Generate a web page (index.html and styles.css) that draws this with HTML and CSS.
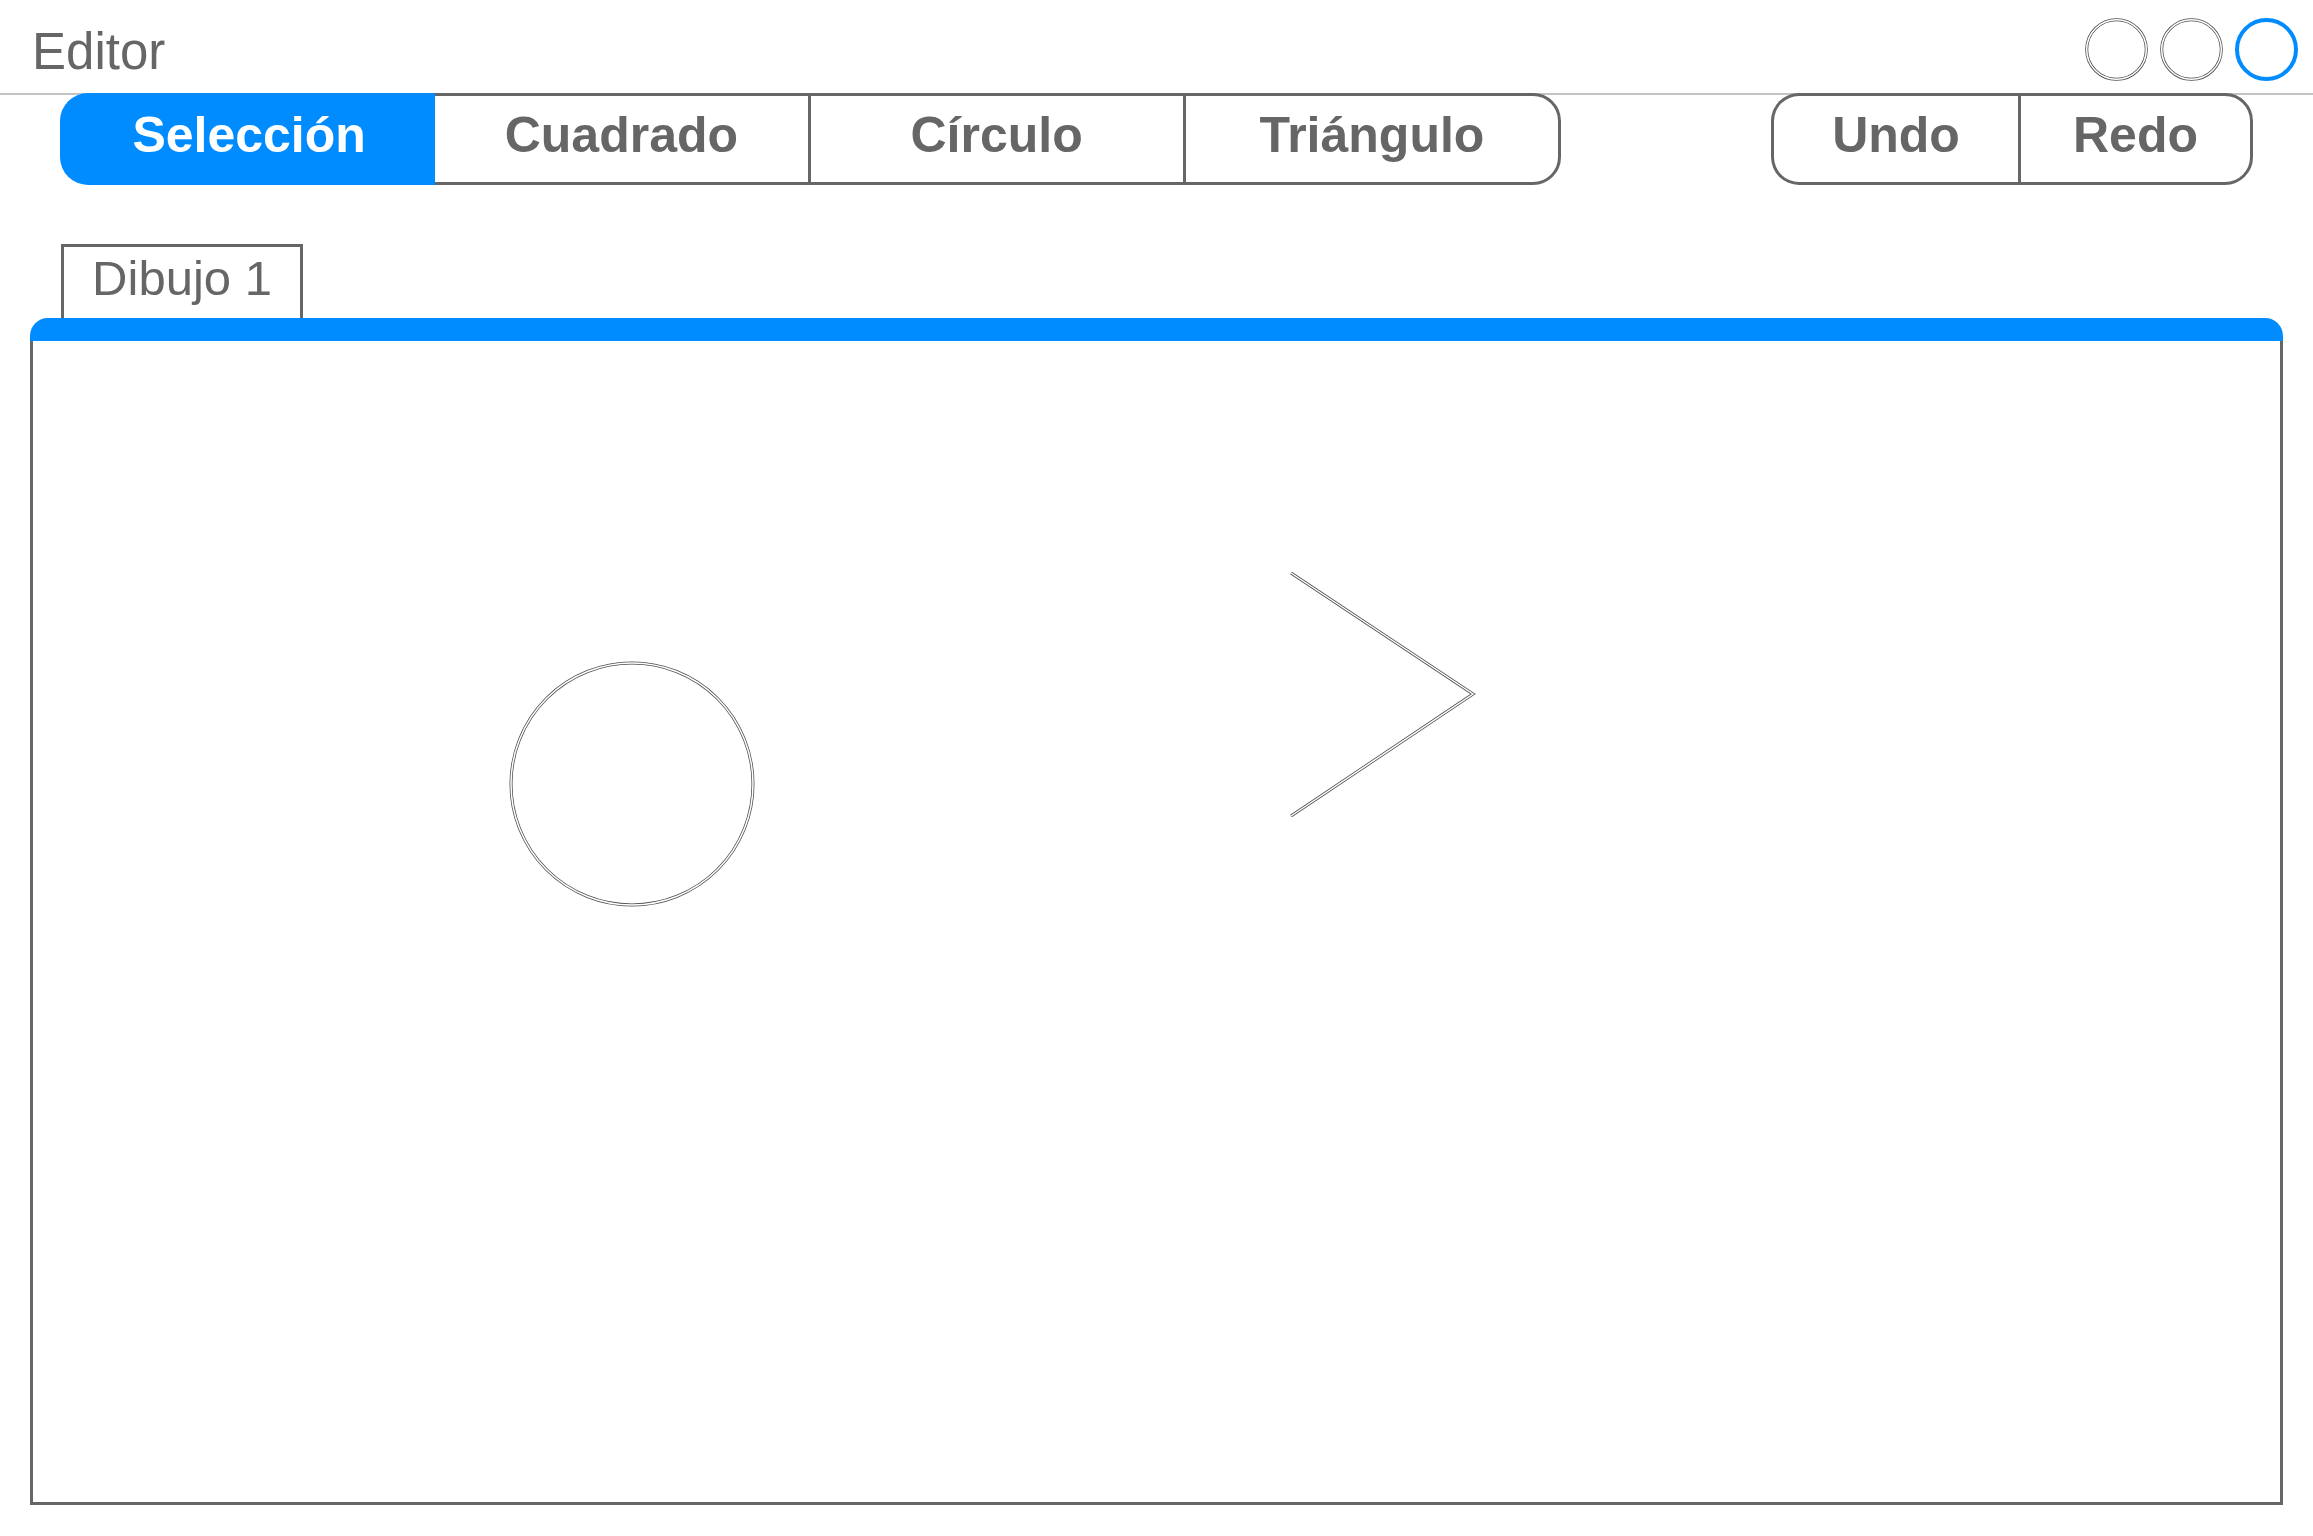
FILE: index.html
```html
<!DOCTYPE html>
<html lang="es">
<head>
<meta charset="utf-8">
<title>Editor</title>
<link rel="stylesheet" href="styles.css">
</head>
<body>
<div class="window">
  <header class="titlebar">
    <div class="title">Editor</div>
    <div class="controls">
      <svg class="ctl" viewBox="0 0 63 63"><circle cx="31.5" cy="31.5" r="29.8" class="ln-dark"/><circle cx="31.5" cy="31.5" r="29.8" class="ln-white"/></svg>
      <svg class="ctl" viewBox="0 0 63 63"><circle cx="31.5" cy="31.5" r="29.8" class="ln-dark"/><circle cx="31.5" cy="31.5" r="29.8" class="ln-white"/></svg>
      <svg class="ctl" viewBox="0 0 63 63"><circle cx="31.5" cy="31.5" r="29.5" class="ln-blue"/></svg>
    </div>
  </header>

  <div class="toolbar">
    <div class="btnbar tools">
      <div class="seg first active">Selección</div>
      <div class="seg">Cuadrado</div>
      <div class="seg">Círculo</div>
      <div class="seg last">Triángulo</div>
    </div>
    <div class="btnbar history">
      <div class="seg first undo">Undo</div>
      <div class="seg last redo">Redo</div>
    </div>
  </div>

  <div class="workspace">
    <div class="tabs">
      <div class="tab">Dibujo 1</div>
    </div>
    <div class="canvas">
      <div class="canvas-bar"></div>
      <div class="canvas-body">
        <svg class="drawing" viewBox="0 0 2247 1161" width="2247" height="1161">
          <circle cx="599" cy="443" r="121" class="ln-dark"/>
          <circle cx="599" cy="443" r="121" class="ln-white"/>
          <polyline points="1258,232 1440,353 1258,475" class="ln-dark chev"/>
          <polyline points="1258,232 1440,353 1258,475" class="ln-white chev"/>
        </svg>
      </div>
    </div>
  </div>
</div>
</body>
</html>
```
FILE: styles.css
```css
html, body {
  margin: 0;
  padding: 0;
  background: #ffffff;
}

body {
  font-family: "Liberation Sans", Arial, Helvetica, sans-serif;
  color: #666666;
}

.window {
  width: 2313px;
  height: 1536px;
  box-sizing: border-box;
}

/* Title bar */
.titlebar {
  height: 95px;
  box-sizing: border-box;
  border-bottom: 2px solid #c4c4c4;
  display: flex;
  justify-content: space-between;
  align-items: flex-start;
  padding: 18px 15px 0 32px;
}

.title {
  font-size: 51px;
  line-height: 60px;
  margin-top: 4px;
  color: #666666;
}

.controls {
  display: flex;
  gap: 12px;
}

.ctl {
  width: 63px;
  height: 63px;
  display: block;
}

.ln-dark {
  fill: none;
  stroke: #4d4d4d;
  stroke-width: 3;
}

.ln-white {
  fill: none;
  stroke: #ffffff;
  stroke-width: 1.5;
}

.ln-blue {
  fill: none;
  stroke: #008cff;
  stroke-width: 4;
}

.chev {
  stroke-linejoin: miter;
}

/* Toolbar */
.toolbar {
  display: flex;
  justify-content: space-between;
  padding: 0 60px;
  margin-top: -2px;
}

.btnbar {
  display: flex;
  height: 92px;
}

.tools {
  width: 1501px;
}

.history {
  width: 482px;
}

.seg {
  flex: 1 1 0;
  box-sizing: border-box;
  border-top: 3px solid #666666;
  border-bottom: 3px solid #666666;
  border-left: 3px solid #666666;
  display: flex;
  justify-content: center;
  align-items: flex-start;
  font-size: 50px;
  font-weight: bold;
  line-height: 79px;
  color: #666666;
  background: #ffffff;
}

.seg.first {
  border-radius: 28px 0 0 28px;
}

.seg.last {
  border-right: 3px solid #666666;
  border-radius: 0 28px 28px 0;
}

.seg.active {
  background: #008cff;
  border-color: #008cff;
  color: #ffffff;
}

.seg.active + .seg {
  border-left: none;
}

.undo {
  flex: 0 0 247px;
}

.redo {
  flex: 0 0 235px;
}

/* Workspace */
.workspace {
  padding: 0 30px;
  margin-top: 59px;
}

.tabs {
  display: flex;
  padding-left: 31px;
}

.tab {
  width: 242px;
  height: 74px;
  box-sizing: border-box;
  border: 3px solid #666666;
  border-bottom: none;
  font-size: 49px;
  line-height: 62px;
  text-align: center;
  color: #666666;
}

.canvas {
  width: 2253px;
}

.canvas-bar {
  height: 23px;
  background: #008cff;
  border-radius: 18px 18px 0 0;
}

.canvas-body {
  position: relative;
  height: 1164px;
  box-sizing: border-box;
  border: 3px solid #666666;
  border-top: none;
  overflow: hidden;
}

.drawing {
  position: absolute;
  left: 0;
  top: 0;
  display: block;
}
```
